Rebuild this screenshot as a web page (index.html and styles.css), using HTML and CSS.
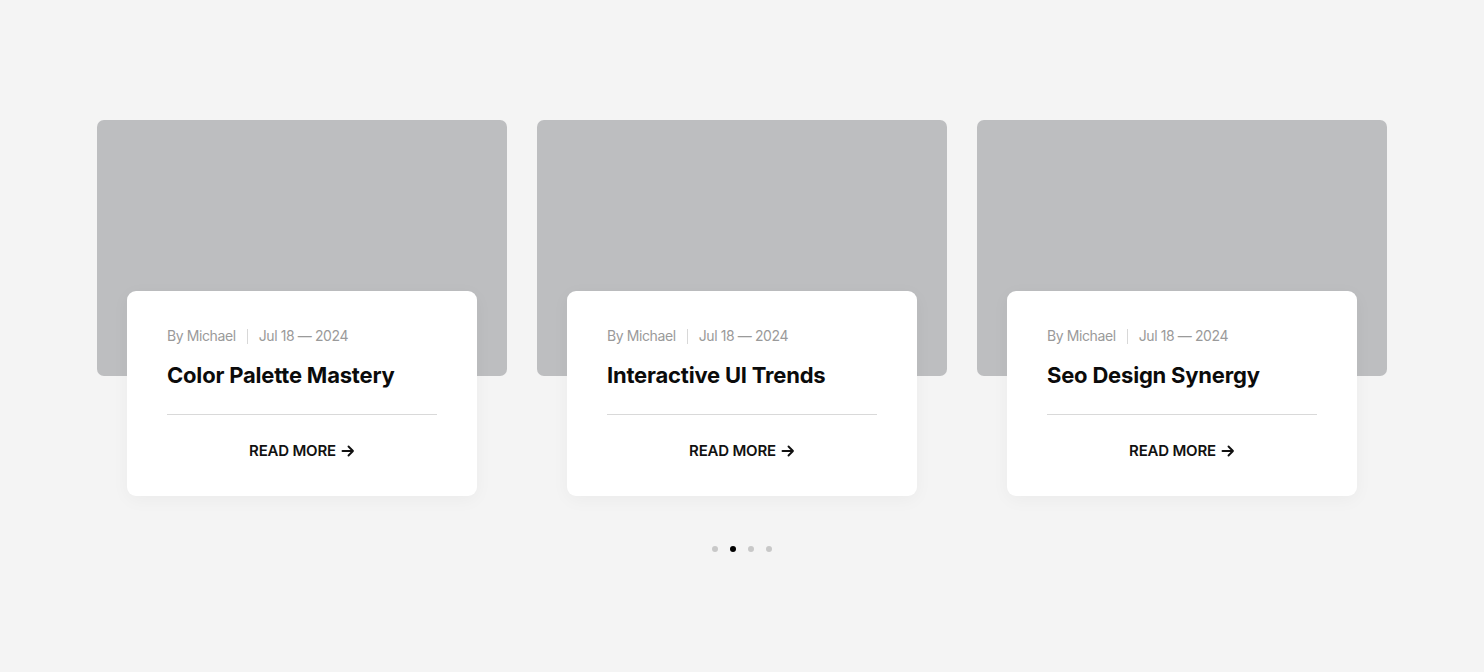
FILE: index.html
```html
<!DOCTYPE html>
<html lang="en">
<head>
    <meta charset="UTF-8">
    <meta name="viewport" content="width=device-width, initial-scale=1.0">
    <link rel="stylesheet" href="styles.css">
    <title>Blog Slider</title>
</head>
<body>
    <section class="blog">
        <div class="slides">
            <article class="post">
                <div class="post-thumb"></div>
                <div class="post-card">
                    <p class="post-meta"><span>By Michael</span><span class="sep"></span><span>Jul 18 — 2024</span></p>
                    <h3 class="post-title">Color Palette Mastery</h3>
                    <a class="read-more" href="#">READ MORE
                        <svg width="14" height="14" viewBox="0 0 14 14"><path d="M1.5 7h10.5M7.5 2.5 12 7l-4.5 4.5" fill="none" stroke="currentColor" stroke-width="1.9" stroke-linecap="round" stroke-linejoin="round"/></svg>
                    </a>
                </div>
            </article>
            <article class="post">
                <div class="post-thumb"></div>
                <div class="post-card">
                    <p class="post-meta"><span>By Michael</span><span class="sep"></span><span>Jul 18 — 2024</span></p>
                    <h3 class="post-title">Interactive UI Trends</h3>
                    <a class="read-more" href="#">READ MORE
                        <svg width="14" height="14" viewBox="0 0 14 14"><path d="M1.5 7h10.5M7.5 2.5 12 7l-4.5 4.5" fill="none" stroke="currentColor" stroke-width="1.9" stroke-linecap="round" stroke-linejoin="round"/></svg>
                    </a>
                </div>
            </article>
            <article class="post">
                <div class="post-thumb"></div>
                <div class="post-card">
                    <p class="post-meta"><span>By Michael</span><span class="sep"></span><span>Jul 18 — 2024</span></p>
                    <h3 class="post-title">Seo Design Synergy</h3>
                    <a class="read-more" href="#">READ MORE
                        <svg width="14" height="14" viewBox="0 0 14 14"><path d="M1.5 7h10.5M7.5 2.5 12 7l-4.5 4.5" fill="none" stroke="currentColor" stroke-width="1.9" stroke-linecap="round" stroke-linejoin="round"/></svg>
                    </a>
                </div>
            </article>
        </div>
        <div class="dots">
            <span class="dot"></span>
            <span class="dot active"></span>
            <span class="dot"></span>
            <span class="dot"></span>
        </div>
    </section>
</body>
</html>
```

FILE: styles.css
```css
body {
    margin: 0;
    background: #f4f4f4;
    font-family: 'Inter', 'Noto Sans', sans-serif;
    color: #111;
}

.blog {
    padding-top: 120px;
    display: flex;
    flex-direction: column;
    align-items: center;
}

.slides {
    display: flex;
    gap: 30px;
}

.post {
    width: 410px;
}

.post-thumb {
    height: 256px;
    background: #bdbec0;
    border-radius: 7px;
}

.post-card {
    position: relative;
    margin: -85px 30px 0;
    padding: 35px 40px 35px;
    background: #fff;
    border-radius: 9px;
    box-shadow: 0 4px 18px rgba(0, 0, 0, 0.04);
}

.post-meta {
    margin: 0;
    display: flex;
    align-items: center;
    font-size: 14px;
    line-height: 20px;
    color: #9a9a9a;
    letter-spacing: -0.4px;
}

.sep {
    width: 1px;
    height: 15px;
    background: #d8d8d8;
    margin: 0 11px;
}

.post-title {
    margin: 14px 0 0;
    padding-bottom: 24px;
    border-bottom: 1px solid #d9d9d9;
    font-size: 22px;
    line-height: 30px;
    font-weight: 700;
    letter-spacing: -0.2px;
    color: #0b0b0b;
}

.read-more {
    margin-top: 26px;
    display: flex;
    justify-content: center;
    align-items: center;
    gap: 5px;
    font-size: 15px;
    line-height: 20px;
    font-weight: 600;
    color: #111;
    text-decoration: none;
    letter-spacing: -0.2px;
}

.dots {
    display: flex;
    gap: 12px;
    margin-top: 50px;
}

.dot {
    width: 6px;
    height: 6px;
    border-radius: 50%;
    background: #c8c8c8;
}

.dot.active {
    background: #000;
}
```
